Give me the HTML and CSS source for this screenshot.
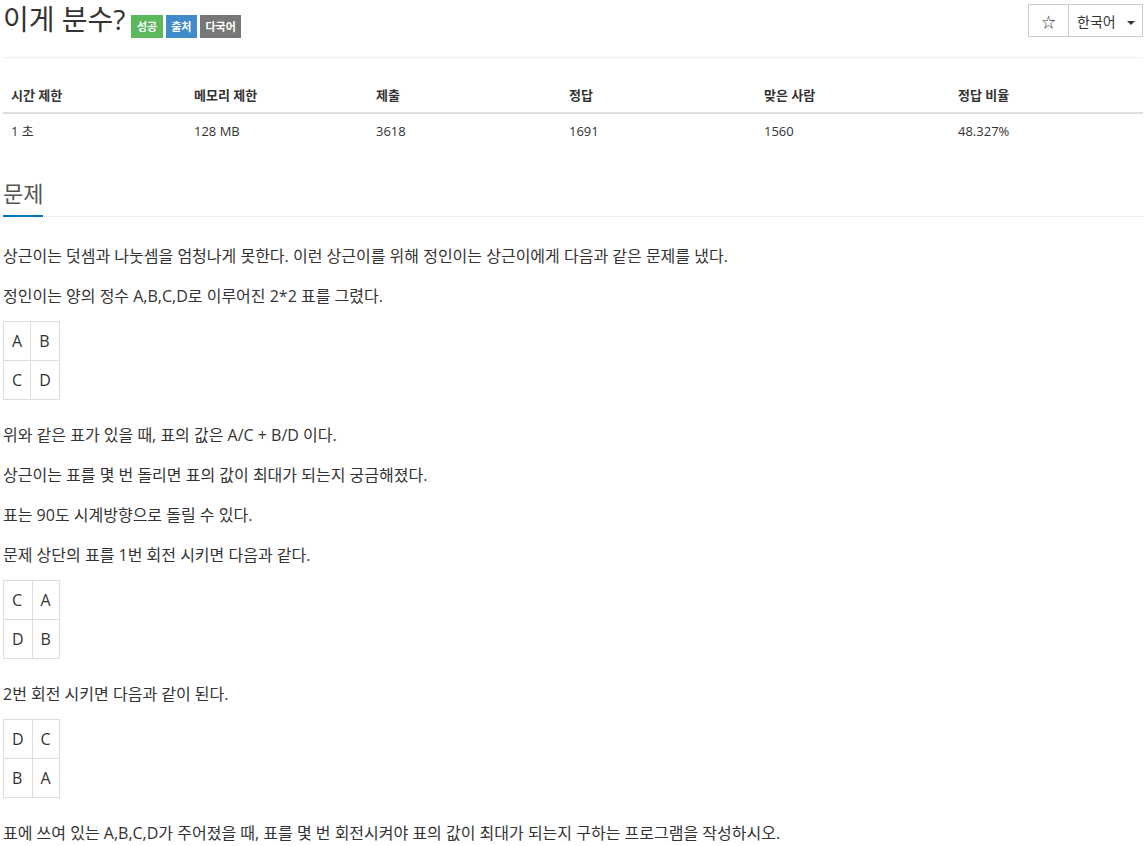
FILE: index.html
```html
<!DOCTYPE html>
<html lang="ko">
<head>
<meta charset="utf-8">
<title>이게 분수?</title>
<link rel="stylesheet" href="styles.css">
</head>
<body>
<div class="page">
  <div class="page-header">
    <div class="title-row">
      <h1 class="title">이게 분수?</h1>
      <span class="label label-success">성공</span>
      <span class="label label-primary">출처</span>
      <span class="label label-default">다국어</span>
    </div>
    <div class="btn-group">
      <button class="btn btn-star">☆</button>
      <button class="btn btn-lang">한국어 <span class="caret"></span></button>
    </div>
  </div>

  <table class="info">
    <thead>
      <tr><th class="c1">시간 제한</th><th class="c2">메모리 제한</th><th class="c3">제출</th><th class="c4">정답</th><th class="c5">맞은 사람</th><th class="c6">정답 비율</th></tr>
    </thead>
    <tbody>
      <tr><td>1 초</td><td>128 MB</td><td>3618</td><td>1691</td><td>1560</td><td>48.327%</td></tr>
    </tbody>
  </table>

  <section class="problem">
    <div class="headline"><h2>문제</h2></div>
    <div class="desc">
      <p>상근이는 덧셈과 나눗셈을 엄청나게 못한다. 이런 상근이를 위해 정인이는 상근이에게 다음과 같은 문제를 냈다.</p>
      <p>정인이는 양의 정수 A,B,C,D로 이루어진 2*2 표를 그렸다.</p>
      <table class="grid">
        <tr><td>A</td><td>B</td></tr>
        <tr><td>C</td><td>D</td></tr>
      </table>
      <p>위와 같은 표가 있을 때, 표의 값은 A/C + B/D 이다.</p>
      <p>상근이는 표를 몇 번 돌리면 표의 값이 최대가 되는지 궁금해졌다.</p>
      <p>표는 90도 시계방향으로 돌릴 수 있다.</p>
      <p>문제 상단의 표를 1번 회전 시키면 다음과 같다.</p>
      <table class="grid">
        <tr><td>C</td><td>A</td></tr>
        <tr><td>D</td><td>B</td></tr>
      </table>
      <p>2번 회전 시키면 다음과 같이 된다.</p>
      <table class="grid">
        <tr><td>D</td><td>C</td></tr>
        <tr><td>B</td><td>A</td></tr>
      </table>
      <p>표에 쓰여 있는 A,B,C,D가 주어졌을 때, 표를 몇 번 회전시켜야 표의 값이 최대가 되는지 구하는 프로그램을 작성하시오.</p>
    </div>
  </section>
</div>
</body>
</html>
```
FILE: styles.css
```css
* { box-sizing: border-box; }
html, body { margin: 0; padding: 0; background: #fff; }
body {
  font-family: "Open Sans", "Noto Sans CJK KR", sans-serif;
  font-size: 13px;
  line-height: 1.42857;
  color: #333;
}
.page {
  width: 1140px;
  margin-left: 3px;
}
.page-header {
  display: flex;
  justify-content: space-between;
  align-items: flex-start;
  border-bottom: 1px solid #eee;
  height: 58px;
}
.title-row {
  display: flex;
  align-items: flex-start;
  gap: 3px;
}
.title {
  margin: 0 3px 0 0;
  font-size: 28px;
  font-weight: 400;
  line-height: 38px;
  color: #333;
}
.label {
  display: inline-block;
  margin-top: 15px;
  height: 23px;
  font-size: 11px;
  font-weight: 700;
  line-height: 23px;
  color: #fff;
  padding: 0 5.5px;
}
.label-success { background: #5cb85c; }
.label-primary { background: #428bca; }
.label-default { background: #777; }
.btn-group {
  display: flex;
  margin-top: 4px;
}
.btn {
  font-family: "Open Sans", "Noto Sans CJK KR", sans-serif;
  font-size: 14px;
  color: #333;
  background: #fff;
  border: 1px solid #ccc;
  height: 33px;
  margin: 0;
  padding: 0 12px;
  cursor: pointer;
}
.btn-star { width: 41px; padding: 0; font-size: 14px; }
.btn-lang { width: 75px; margin-left: -1px; padding: 0 0 0 8px; text-align: left; }
.caret {
  display: inline-block;
  width: 0; height: 0;
  border-top: 4px solid #333;
  border-left: 4px solid transparent;
  border-right: 4px solid transparent;
  vertical-align: middle;
  margin-left: 8px;
}
.info {
  width: 1140px;
  border-collapse: collapse;
  margin-top: 21px;
}
.info th, .info td {
  text-align: left;
  padding: 8px 8px;
  font-size: 13px;
}
.info th {
  font-weight: 700;
  border-bottom: 2px solid #ddd;
  padding-top: 7px;
  padding-bottom: 7px;
}
.info td { padding-top: 8px; padding-bottom: 8px; }
.c1 { width: 183px; }
.c2 { width: 182px; }
.c3 { width: 193px; }
.c4 { width: 195px; }
.c5 { width: 194px; }
.c6 { width: 193px; }
.problem { margin-top: 29px; }
.headline {
  border-bottom: 1px dotted #ddd;
  margin-bottom: 24px;
}
.headline h2 {
  display: inline-block;
  margin: 0 0 -1px;
  font-size: 22px;
  font-weight: 400;
  line-height: 33px;
  padding-bottom: 5px;
  border-bottom: 2px solid #0076c0;
  color: #555;
}
.desc p {
  margin: 0 0 10px;
  font-size: 16px;
  line-height: 30px;
}
.grid {
  border-collapse: collapse;
  margin: 0 0 20px;
}
.grid td {
  border: 1px solid #ddd;
  padding: 8px 8px;
  font-size: 16px;
  line-height: 22px;
}
```
